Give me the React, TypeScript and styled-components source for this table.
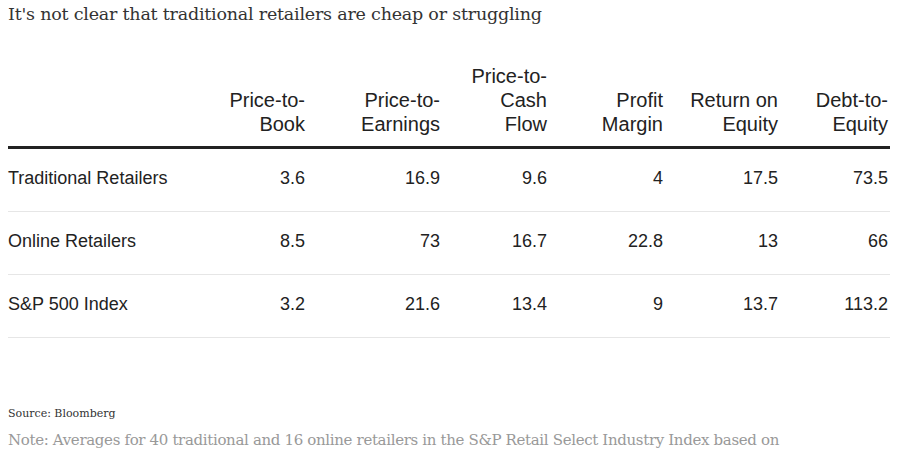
import styled, { createGlobalStyle } from "styled-components";

const GlobalStyle = createGlobalStyle`
  body {
    margin: 0;
    background: #fff;
  }
`;

const COLUMNS = "189px 110px 135px 107px 116px 115px 110px";

const Page = styled.div`
  padding: 0 8px;
  width: 882px;
`;

const Title = styled.h1`
  margin: 2px 0 0;
  font-family: "DejaVu Serif", serif;
  font-weight: normal;
  font-size: 17.5px;
  letter-spacing: -0.22px;
  line-height: 24px;
  color: #333;
`;

const Table = styled.div`
  margin-top: 38px;
  font-family: "Liberation Sans", Arial, sans-serif;
  color: #222;
`;

const HeadRow = styled.div`
  display: grid;
  grid-template-columns: ${COLUMNS};
  align-items: end;
  padding-bottom: 10px;
  border-bottom: 3px solid #222;
`;

const HeadCell = styled.div`
  text-align: right;
  padding-right: 2px;
  font-size: 20px;
  line-height: 24px;
`;

const Row = styled.div`
  display: grid;
  grid-template-columns: ${COLUMNS};
  align-items: center;
  height: 62px;
  border-bottom: 1px solid #e6e6e6;
`;

const Cell = styled.div<{ $label?: boolean }>`
  text-align: ${(p) => (p.$label ? "left" : "right")};
  padding-right: 2px;
  padding-bottom: 4px;
  font-size: 18px;
`;

const Source = styled.p`
  margin: 68px 0 0;
  font-family: "DejaVu Serif", serif;
  font-size: 11px;
  line-height: 16px;
  color: #333;
`;

const Note = styled.p`
  margin: 7px 0 0;
  font-family: "DejaVu Serif", serif;
  font-size: 15px;
  letter-spacing: -0.34px;
  line-height: 22px;
  color: #999;
  white-space: nowrap;
`;

const headers = [
  ["Price-to-", "Book"],
  ["Price-to-", "Earnings"],
  ["Price-to-", "Cash", "Flow"],
  ["Profit", "Margin"],
  ["Return on", "Equity"],
  ["Debt-to-", "Equity"],
];

const rows: [string, string[]][] = [
  ["Traditional Retailers", ["3.6", "16.9", "9.6", "4", "17.5", "73.5"]],
  ["Online Retailers", ["8.5", "73", "16.7", "22.8", "13", "66"]],
  ["S&P 500 Index", ["3.2", "21.6", "13.4", "9", "13.7", "113.2"]],
];

export default function App() {
  return (
    <Page>
      <GlobalStyle />
      <Title>It's not clear that traditional retailers are cheap or struggling</Title>
      <Table>
        <HeadRow>
          <HeadCell />
          {headers.map((lines, i) => (
            <HeadCell key={i}>
              {lines.map((l, j) => (
                <div key={j}>{l}</div>
              ))}
            </HeadCell>
          ))}
        </HeadRow>
        {rows.map(([label, values]) => (
          <Row key={label}>
            <Cell $label>{label}</Cell>
            {values.map((v, i) => (
              <Cell key={i}>{v}</Cell>
            ))}
          </Row>
        ))}
      </Table>
      <Source>Source: Bloomberg</Source>
      <Note>
        Note: Averages for 40 traditional and 16 online retailers in the S&amp;P Retail Select
        Industry Index based on
      </Note>
    </Page>
  );
}
